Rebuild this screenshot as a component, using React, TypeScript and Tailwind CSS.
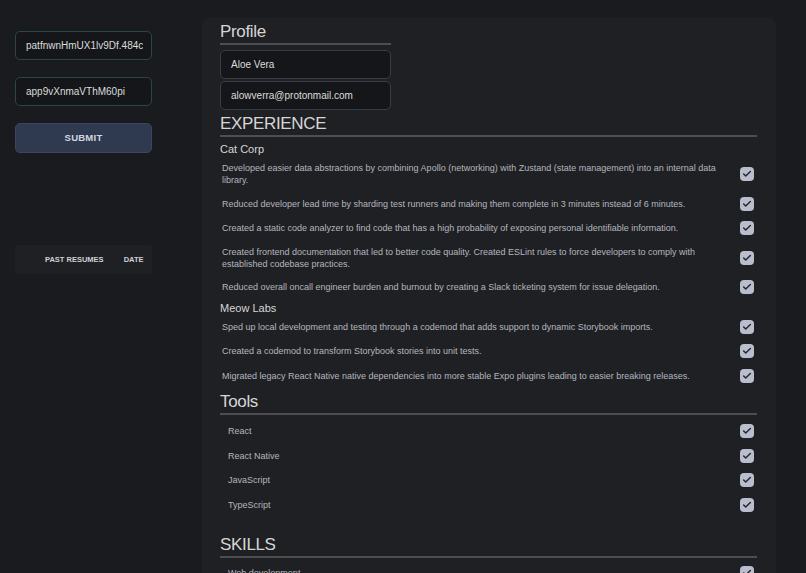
import { Check } from 'lucide-react'

const CAT_CORP = [
  'Developed easier data abstractions by combining Apollo (networking) with Zustand (state management) into an internal data library.',
  'Reduced developer lead time by sharding test runners and making them complete in 3 minutes instead of 6 minutes.',
  'Created a static code analyzer to find code that has a high probability of exposing personal identifiable information.',
  'Created frontend documentation that led to better code quality. Created ESLint rules to force developers to comply with established codebase practices.',
  'Reduced overall oncall engineer burden and burnout by creating a Slack ticketing system for issue delegation.',
]

const MEOW_LABS = [
  'Sped up local development and testing through a codemod that adds support to dynamic Storybook imports.',
  'Created a codemod to transform Storybook stories into unit tests.',
  'Migrated legacy React Native native dependencies into more stable Expo plugins leading to easier breaking releases.',
]

const TOOLS = ['React', 'React Native', 'JavaScript', 'TypeScript']

function Box() {
  return (
    <span className="w-[14px] h-[14px] shrink-0 rounded-[4px] bg-[#b9bdcc] flex items-center justify-center">
      <Check size={10} strokeWidth={3.5} className="text-[#25272d]" />
    </span>
  )
}

function Heading({ children, narrow = false }: { children: React.ReactNode; narrow?: boolean }) {
  return (
    <div className={`border-b-2 border-[#4d4e51] ${narrow ? 'w-[171px]' : ''}`}>
      <h2 className="text-[17px] leading-[22px] tracking-[-0.02em] text-[#d6d6d6]">{children}</h2>
    </div>
  )
}

function Row({ text, indent = false }: { text: string; indent?: boolean }) {
  return (
    <div className={`flex items-center gap-5 py-[5.25px] pr-[3px] ${indent ? 'pl-[8px]' : 'pl-[2px]'}`}>
      <span className="flex-1 text-[9px] leading-[12px] text-[#b3b7bf]">{text}</span>
      <Box />
    </div>
  )
}

export default function App() {
  return (
    <div className="h-[573px] overflow-hidden bg-[#1a1b1e] flex" style={{ fontFamily: '"Liberation Sans", Arial, sans-serif' }}>
      <aside className="w-[137px] ml-[15px] shrink-0 pt-[31px] flex flex-col">
        <div className="h-[29px] rounded-[5px] border border-[#2e4447] bg-[#151619] pl-[10px] pr-[3px] flex items-center overflow-hidden">
          <span className="text-[10px] text-[#dcdcdc] whitespace-nowrap overflow-hidden">patfnwnHmUX1lv9Df.484c</span>
        </div>
        <div className="h-[29px] mt-[17px] rounded-[5px] border border-[#2e4447] bg-[#151619] px-[10px] flex items-center">
          <span className="text-[10px] text-[#dcdcdc] whitespace-nowrap">app9vXnmaVThM60pi</span>
        </div>
        <button className="h-[30px] mt-[17px] rounded-[5px] border border-[#3a465d] bg-[#2f3a50] text-[9.5px] font-bold text-[#d2d6de] tracking-wide">
          SUBMIT
        </button>
        <div className="mt-[92px] h-[29px] bg-[#1f2023] rounded-[2px] flex items-center gap-[20px] pl-[30px] text-[7.5px] font-bold text-[#cfd1d5]">
          <span>PAST RESUMES</span>
          <span>DATE</span>
        </div>
      </aside>

      <main className="ml-[50px] mt-[18px] w-[574px] shrink-0 bg-[#1f2023] rounded-t-[8px] pl-[18px] pr-[19px] pt-[3px]">
        <Heading narrow>Profile</Heading>
        <div className="w-[171px] mt-[5px] flex flex-col gap-[2px]">
          <div className="h-[29px] rounded-[5px] border border-[#383d47] bg-[#151619] px-[10px] flex items-center text-[10px] text-[#dcdcdc]">Aloe Vera</div>
          <div className="h-[29px] rounded-[5px] border border-[#383d47] bg-[#151619] px-[10px] flex items-center text-[10px] text-[#dcdcdc]">alowverra@protonmail.com</div>
        </div>

        <div className="mt-[3px]"><Heading>EXPERIENCE</Heading></div>
        <div className="text-[11px] leading-[14px] text-[#d6d6d6] mt-[5px]">Cat Corp</div>
        <div className="mt-[1px]">
          {CAT_CORP.map(t => <Row key={t} text={t} />)}
        </div>
        <div className="text-[11px] leading-[14px] text-[#d6d6d6] mt-[1px]">Meow Labs</div>
        <div>
          {MEOW_LABS.map(t => <Row key={t} text={t} />)}
        </div>

        <div className="mt-[3px]"><Heading>Tools</Heading></div>
        <div className="mt-[4px]">
          {TOOLS.map(t => <Row key={t} text={t} indent />)}
        </div>

        <div className="mt-[17px]"><Heading>SKILLS</Heading></div>
        <div className="mt-[3px]">
          <Row text="Web development" indent />
        </div>
      </main>
    </div>
  )
}
